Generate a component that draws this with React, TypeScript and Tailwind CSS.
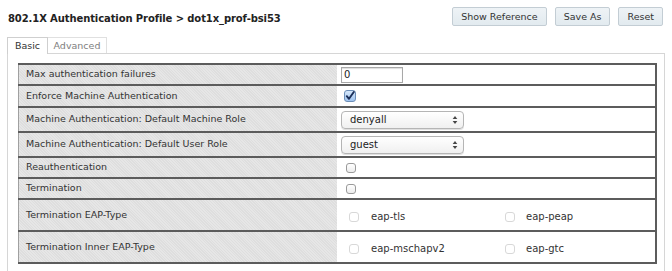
import React from "react";

function CheckedBox() {
  return (
    <span className="inline-flex h-[12px] w-[12px] items-center justify-center rounded-[3px] border border-[#6d8fb8] bg-[linear-gradient(#d7e8fb,#9fc3ef)]">
      <svg width="10" height="10" viewBox="0 0 10 10">
        <path d="M1.8 5.2 L4 7.8 L8.8 1" fill="none" stroke="#1b2f59" strokeWidth="1.9" strokeLinecap="round" strokeLinejoin="round" />
      </svg>
    </span>
  );
}

function EmptyBox({ faded }: { faded?: boolean }) {
  return (
    <span
      className={
        faded
          ? "inline-block h-[10px] w-[10px] rounded-[3px] border border-[#d8d8d8] bg-white"
          : "inline-block h-[10px] w-[10px] rounded-[3px] border border-[#9a9a9a] bg-[linear-gradient(#ffffff,#ececec)]"
      }
    />
  );
}

function Select({ value }: { value: string }) {
  return (
    <div className="flex h-[18px] w-[123px] items-center justify-between rounded-[4px] border border-[#b5b5b5] bg-[linear-gradient(#ffffff,#f0f0f0)] pl-[8px] pr-[5px] text-[10px] text-[#222] shadow-[0_1px_0_#e0e0e0]">
      <span>{value}</span>
      <svg width="6" height="10" viewBox="0 0 6 10">
        <path d="M3 1 L5.3 4 L0.7 4 Z" fill="#444" />
        <path d="M3 9 L5.3 6 L0.7 6 Z" fill="#444" />
      </svg>
    </div>
  );
}

type Row = { label: string; h: string; value: React.ReactNode };

export default function App() {
  const rows: Row[] = [
    {
      label: "Max authentication failures",
      h: "h-[21px]",
      value: (
        <div className="flex h-[16px] w-[62px] items-center border border-[#a8a8a8] pl-[2px] text-[10px] text-[#222] shadow-[inset_0_1px_1px_#ddd]">
          0
        </div>
      ),
    },
    {
      label: "Enforce Machine Authentication",
      h: "h-[22px]",
      value: (
        <div className="pl-[3px]">
          <CheckedBox />
        </div>
      ),
    },
    { label: "Machine Authentication: Default Machine Role", h: "h-[25px]", value: <Select value="denyall" /> },
    { label: "Machine Authentication: Default User Role", h: "h-[25px]", value: <Select value="guest" /> },
    {
      label: "Reauthentication",
      h: "h-[21px]",
      value: (
        <div className="flex pl-[5px]">
          <EmptyBox />
        </div>
      ),
    },
    {
      label: "Termination",
      h: "h-[21px]",
      value: (
        <div className="flex pl-[5px]">
          <EmptyBox />
        </div>
      ),
    },
    {
      label: "Termination EAP-Type",
      h: "h-[32px]",
      value: (
        <div className="flex items-center pl-[8px] pt-[3px] text-[10px] text-[#333]">
          <div className="flex w-[156px] items-center gap-[12px]">
            <EmptyBox faded />
            <span>eap-tls</span>
          </div>
          <div className="flex items-center gap-[11px]">
            <EmptyBox faded />
            <span>eap-peap</span>
          </div>
        </div>
      ),
    },
    {
      label: "Termination Inner EAP-Type",
      h: "h-[32px]",
      value: (
        <div className="flex items-center pl-[8px] pt-[3px] text-[10px] text-[#333]">
          <div className="flex w-[156px] items-center gap-[12px]">
            <EmptyBox faded />
            <span>eap-mschapv2</span>
          </div>
          <div className="flex items-center gap-[11px]">
            <EmptyBox faded />
            <span>eap-gtc</span>
          </div>
        </div>
      ),
    },
  ];

  return (
    <div className="h-[271px] w-[672px] overflow-hidden bg-white font-['DejaVu_Sans','Liberation_Sans',sans-serif] text-[#333]">
      <div className="flex items-start justify-between pl-[8px] pr-[9px] pt-[7px]">
        <h1 className="mt-[4px] text-[10px] font-bold tracking-[-0.1px] text-[#222]">
          802.1X Authentication Profile &gt; dot1x_prof-bsi53
        </h1>
        <div className="flex gap-[8px]">
          {["Show Reference", "Save As", "Reset"].map((b) => (
            <button
              key={b}
              className="h-[19px] rounded-[2px] border border-[#c3cdd4] bg-[linear-gradient(#eef3f6,#e2eaef)] px-[8px] text-[9.5px] leading-none text-[#333]"
            >
              {b}
            </button>
          ))}
        </div>
      </div>

      <div className="ml-[7px] mt-[11px] flex">
        <div className="relative z-10 -mb-px flex h-[17px] w-[41px] items-center justify-center border border-b-0 border-[#cfcfcf] bg-white pt-[1px] text-[9.5px] text-[#333]">
          Basic
        </div>
        <div className="flex h-[16px] w-[59px] items-center justify-center border-r border-t border-[#e0e0e0] bg-white pt-[1px] text-[9.5px] text-[#808080]">
          Advanced
        </div>
      </div>

      <div className="ml-[7px] h-[230px] w-[658px] border border-[#d6d6d6] pl-[10px] pt-[9px]">
        <div className="w-[639px] border-b-2 border-r-2 border-[#5c5c5c]">
          {rows.map((r) => (
            <div key={r.label} className={`flex border-t-2 border-[#5c5c5c] ${r.h}`}>
              <div className="flex w-[319px] items-center border-l border-[#a0a0a0] bg-[#e4e4e4] bg-[repeating-linear-gradient(45deg,#e6e6e6_0px,#e6e6e6_1px,#dedede_1px,#dedede_2px)] pl-[7px] text-[9.5px] text-[#333]">
                {r.label}
              </div>
              <div className="flex flex-1 items-center bg-white pl-[4px]">{r.value}</div>
            </div>
          ))}
        </div>
      </div>
    </div>
  );
}
